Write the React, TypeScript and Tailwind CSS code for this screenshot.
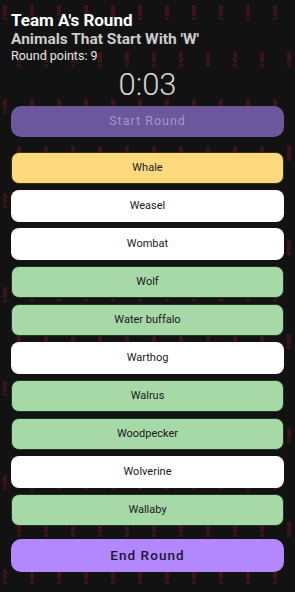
import React from 'react';

type Status = 'current' | 'skipped' | 'correct';

const animals: { name: string; status: Status }[] = [
  { name: 'Whale', status: 'current' },
  { name: 'Weasel', status: 'skipped' },
  { name: 'Wombat', status: 'skipped' },
  { name: 'Wolf', status: 'correct' },
  { name: 'Water buffalo', status: 'correct' },
  { name: 'Warthog', status: 'skipped' },
  { name: 'Walrus', status: 'correct' },
  { name: 'Woodpecker', status: 'correct' },
  { name: 'Wolverine', status: 'skipped' },
  { name: 'Wallaby', status: 'correct' },
];

const statusClass: Record<Status, string> = {
  current: 'bg-[#fdda7e] border-[#3a2f12]',
  skipped: 'bg-white border-transparent',
  correct: 'bg-[#a6d8a8] border-[#1f3a22]',
};

// faint red "!" marks behind everything
function Pattern() {
  const rows = Array.from({ length: 13 });
  const cols = Array.from({ length: 11 });
  return (
    <div className="absolute inset-0 overflow-hidden flex flex-col pt-[5px] gap-[32px] pointer-events-none">
      {rows.map((_, r) => (
        <div key={r} className={`flex gap-[23px] ${r % 2 === 0 ? 'pl-[3px]' : 'pl-[17px]'}`}>
          {cols.map((_, c) => (
            <div key={c} className="w-[4px] h-[15px] shrink-0 flex flex-col gap-[1px]">
              <div className="h-[11px] rounded-[1px] bg-[#3a141a]" />
              <div className="h-[3px] rounded-[1px] bg-[#3a141a]" />
            </div>
          ))}
        </div>
      ))}
    </div>
  );
}

export default function App() {
  return (
    <div className="relative w-[295px] h-[592px] overflow-hidden bg-[#121212] font-['Roboto',sans-serif]">
      <Pattern />
      <div className="relative flex flex-col px-[11px] pt-[10px]">
        <h1 className="text-[17px] leading-[20px] font-bold text-white">Team A's Round</h1>
        <h2 className="text-[15.5px] leading-[18px] font-bold text-[#cccccc]">Animals That Start With 'W'</h2>
        <p className="text-[12.5px] leading-[16px] text-[#e6e6e6]">Round points: 9</p>
        <div className="mt-[2px] text-center text-[31px] leading-[38px] font-light text-[#d6d6d6]">0:03</div>
        <button className="mt-[2px] h-[31px] rounded-[10px] bg-[#6a579c] text-[12.5px] tracking-[0.08em] text-[#a495cc]">
          Start Round
        </button>
        <div className="mt-[15px] flex flex-col gap-[6px]">
          {animals.map((a) => (
            <div
              key={a.name}
              className={`h-[32px] rounded-[8px] border flex items-center justify-center text-[11px] text-[#1a1a1a] ${statusClass[a.status]}`}
            >
              {a.name}
            </div>
          ))}
        </div>
        <button className="mt-[13px] h-[33px] rounded-[10px] bg-[#b388ff] text-[13.5px] tracking-[0.08em] font-medium text-[#1f1533]">
          End Round
        </button>
      </div>
    </div>
  );
}
